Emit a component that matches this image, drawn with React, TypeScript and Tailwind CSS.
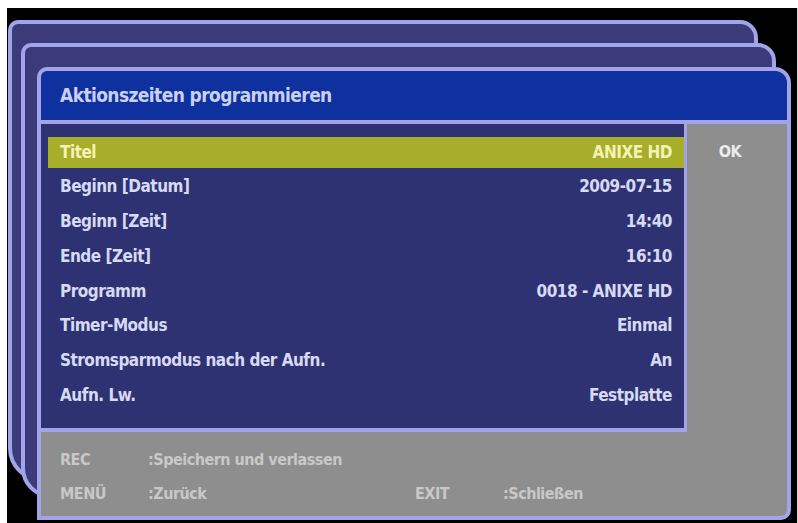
import React from "react";

const rows: [string, string][] = [
  ["Titel", "ANIXE HD"],
  ["Beginn [Datum]", "2009-07-15"],
  ["Beginn [Zeit]", "14:40"],
  ["Ende [Zeit]", "16:10"],
  ["Programm", "0018 - ANIXE HD"],
  ["Timer-Modus", "Einmal"],
  ["Stromsparmodus nach der Aufn.", "An"],
  ["Aufn. Lw.", "Festplatte"],
];

export default function App() {
  return (
    <div
      className="w-[798px] h-[523px] bg-white overflow-hidden"
      style={{ fontFamily: '"DejaVu Sans Condensed", "DejaVu Sans", sans-serif' }}
    >
      <div className="relative ml-[7px] mt-[8px] w-[791px] h-[515px] bg-black border-r border-[#d8d8d8]">
        {/* back panel 1 */}
        <div className="absolute left-[1px] top-[12px] w-[750px] h-[462px] bg-[#3a3b78] border-[4px] border-[#a2a4ea] rounded-tl-[10px] rounded-tr-[18px] rounded-bl-[34px]" />
        {/* back panel 2 */}
        <div className="absolute left-[14px] top-[35px] w-[755px] h-[455px] bg-[#3a3b78] border-[4px] border-[#a2a4ea] rounded-tl-[10px] rounded-tr-[18px] rounded-bl-[30px]" />
        {/* front panel */}
        <div className="absolute left-[30px] top-[59px] w-[754px] h-[453px] bg-[#8e8e8e] border-[4px] border-[#a2a4ea] rounded-tl-[10px] rounded-tr-[16px] rounded-br-[10px] flex flex-col overflow-hidden">
          <div className="h-[49px] shrink-0 bg-[#0f31a0] flex items-center pl-[19px] text-[19px] font-bold text-[#c9d0f2] tracking-[-0.6px]">
            Aktionszeiten programmieren
          </div>
          <div className="h-[4px] shrink-0 bg-[#a2a4ea]" />
          <div className="flex flex-1">
            <div className="flex flex-col">
              <div className="w-[646px] h-[308px] bg-[#2e3272] border-r-[3px] border-b-[4px] border-[#a2a4ea] pl-[7px] pt-[13px] flex flex-col gap-[3.7px]">
                {rows.map(([label, value], i) => (
                  <div
                    key={label}
                    className={
                      "h-[31px] shrink-0 flex items-center justify-between pl-[12px] pr-[12px] text-[17px] font-bold tracking-[-0.5px] " +
                      (i === 0 ? "bg-[#a7ae2a] text-[#f3f3b6]" : "text-[#d6daf2]")
                    }
                  >
                    <span>{label}</span>
                    <span>{value}</span>
                  </div>
                ))}
              </div>
              <div className="flex-1 pl-[19px] pt-[16px] text-[16px] font-bold tracking-[-0.5px] text-[#c8c8c8] flex flex-col gap-[10px]">
                <div className="flex">
                  <span className="w-[88px]">REC</span>
                  <span>:Speichern und verlassen</span>
                </div>
                <div className="flex">
                  <span className="w-[88px]">MENÜ</span>
                  <span className="w-[267px]">:Zurück</span>
                  <span className="w-[88px]">EXIT</span>
                  <span>:Schließen</span>
                </div>
              </div>
            </div>
            <div className="flex-1 flex justify-center pt-[16px] pr-[14px]">
              <span className="text-[16px] font-bold tracking-[-0.5px] text-[#ececec]">OK</span>
            </div>
          </div>
        </div>
      </div>
    </div>
  );
}
